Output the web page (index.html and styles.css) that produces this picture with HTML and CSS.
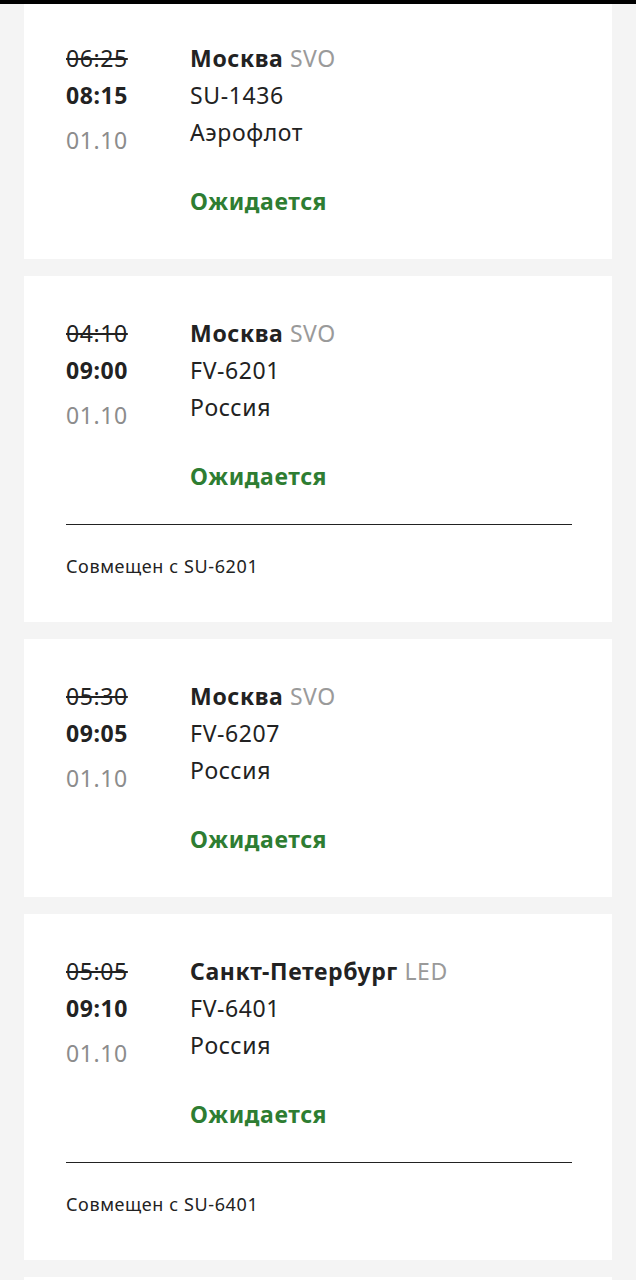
FILE: index.html
```html
<!doctype html>
<html lang="ru">
  <head>
    <meta charset="UTF-8" />
    <meta name="viewport" content="width=device-width, initial-scale=1.0" />
    <title>Табло прилетов</title>
    <link rel="stylesheet" href="styles.css">
  </head>
  <body>
    <div class="topbar"></div>

    <div class="flights">
      <div class="flight">
        <div class="flight-main">
          <div class="times">
            <div class="time-old">06:25</div>
            <div class="time-new">08:15</div>
            <div class="date">01.10</div>
          </div>
          <div class="info">
            <div class="city">Москва <span class="code">SVO</span></div>
            <div class="line">SU-1436</div>
            <div class="line">Аэрофлот</div>
            <div class="status">Ожидается</div>
          </div>
        </div>
      </div>

      <div class="flight">
        <div class="flight-main">
          <div class="times">
            <div class="time-old">04:10</div>
            <div class="time-new">09:00</div>
            <div class="date">01.10</div>
          </div>
          <div class="info">
            <div class="city">Москва <span class="code">SVO</span></div>
            <div class="line">FV-6201</div>
            <div class="line">Россия</div>
            <div class="status">Ожидается</div>
          </div>
        </div>
        <div class="codeshare">Совмещен с SU-6201</div>
      </div>

      <div class="flight">
        <div class="flight-main">
          <div class="times">
            <div class="time-old">05:30</div>
            <div class="time-new">09:05</div>
            <div class="date">01.10</div>
          </div>
          <div class="info">
            <div class="city">Москва <span class="code">SVO</span></div>
            <div class="line">FV-6207</div>
            <div class="line">Россия</div>
            <div class="status">Ожидается</div>
          </div>
        </div>
      </div>

      <div class="flight">
        <div class="flight-main">
          <div class="times">
            <div class="time-old">05:05</div>
            <div class="time-new">09:10</div>
            <div class="date">01.10</div>
          </div>
          <div class="info">
            <div class="city">Санкт-Петербург <span class="code">LED</span></div>
            <div class="line">FV-6401</div>
            <div class="line">Россия</div>
            <div class="status">Ожидается</div>
          </div>
        </div>
        <div class="codeshare">Совмещен с SU-6401</div>
      </div>

      <div class="flight">
        <div class="flight-main">
          <div class="times">
            <div class="time-old">05:40</div>
            <div class="time-new">09:15</div>
            <div class="date">01.10</div>
          </div>
          <div class="info">
            <div class="city">Москва <span class="code">SVO</span></div>
            <div class="line">FV-6209</div>
            <div class="line">Россия</div>
            <div class="status">Ожидается</div>
          </div>
        </div>
      </div>
    </div>
  </body>
</html>
```

FILE: styles.css
```css
body {
  font-family: "Noto Sans", "Open Sans", sans-serif;
  background-color: #f4f4f4;
  color: #222;
  margin: 0;
  padding: 1px 0 0;
}
.topbar {
  position: fixed;
  top: 0;
  left: 0;
  right: 0;
  height: 4px;
  background-color: #000;
  z-index: 10;
}
.flights {
  padding: 0 24px;
}
.flight {
  background-color: white;
  margin-bottom: 17px;
  padding: 0 40px 10px 42px;
}
.flight-main {
  display: flex;
  gap: 62px;
  padding: 39px 0 29px;
  font-size: 23px;
  line-height: 37px;
  letter-spacing: 0.6px;
}
.time-old {
  text-decoration: line-through;
  text-decoration-thickness: 2px;
}
.time-new {
  font-weight: 700;
}
.date {
  color: #8c8c8c;
  margin-top: 8px;
}
.city {
  font-weight: 700;
}
.code {
  font-weight: 400;
  color: #9a9a9a;
}
.status {
  color: #2e7d32;
  font-weight: 700;
  margin-top: 32px;
}
.codeshare {
  border-top: 1px solid #222;
  padding: 29px 0 34px 0;
  font-size: 18px;
  line-height: 24px;
  letter-spacing: 0.6px;
}
```
